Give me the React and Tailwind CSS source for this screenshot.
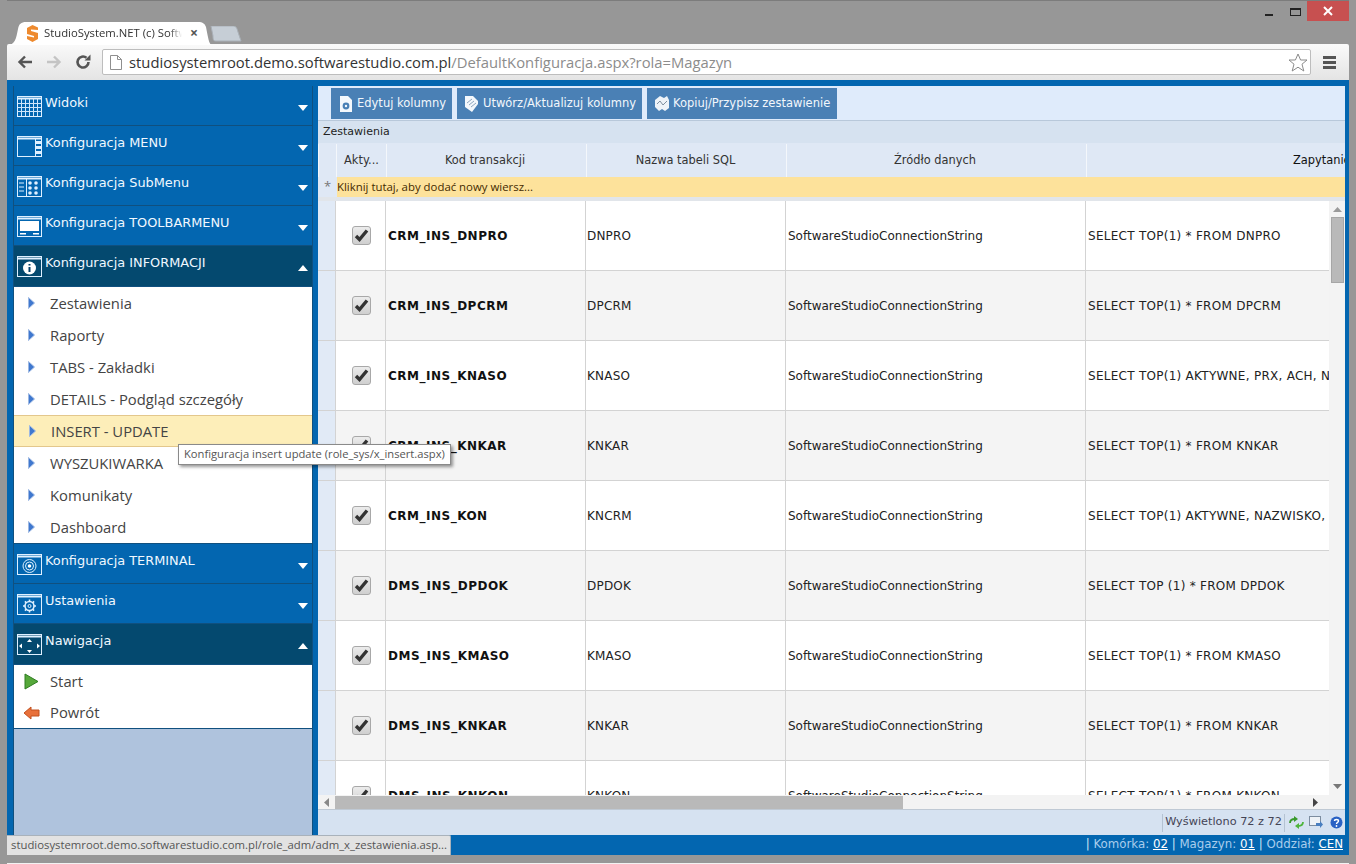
const SANS = "font-['Open_Sans','Noto_Sans',sans-serif]";
const VERD = "font-['DejaVu_Sans',sans-serif]";

const ROWS = [
  ["CRM_INS_DNPRO", "DNPRO", "SELECT TOP(1) * FROM DNPRO"],
  ["CRM_INS_DPCRM", "DPCRM", "SELECT TOP(1) * FROM DPCRM"],
  ["CRM_INS_KNASO", "KNASO", "SELECT TOP(1) AKTYWNE, PRX, ACH, NIP, NAZWA"],
  ["CRM_INS_KNKAR", "KNKAR", "SELECT TOP(1) * FROM KNKAR"],
  ["CRM_INS_KON", "KNCRM", "SELECT TOP(1) AKTYWNE, NAZWISKO, IMIE, TELEFON"],
  ["DMS_INS_DPDOK", "DPDOK", "SELECT TOP (1) * FROM DPDOK"],
  ["DMS_INS_KMASO", "KMASO", "SELECT TOP(1) * FROM KMASO"],
  ["DMS_INS_KNKAR", "KNKAR", "SELECT TOP(1) * FROM KNKAR"],
  ["DMS_INS_KNKON", "KNKON", "SELECT TOP(1) * FROM KNKON"],
];

// biała ramka okna z paskiem u góry, w środku rysunek danej sekcji
function WinIcon({ children }) {
  return (
    <svg width="25" height="21" viewBox="0 0 25 21" className="shrink-0" fill="none" stroke="#dff0ff" strokeWidth="1">
      <rect x="0.5" y="0.5" width="24" height="20" />
      <path d="M0.5 2.5H24.5" strokeWidth="2" />
      {children}
    </svg>
  );
}

const ICONS = {
  table: (
    <path d="M0.5 7.5H24.5M0.5 11.5H24.5M0.5 15.5H24.5M4.5 3V20M8.5 3V20M12.5 3V20M16.5 3V20M20.5 3V20" stroke="#cfe6fa" />
  ),
  menu: (
    <>
      <path d="M18.5 3V20" />
      <rect x="19" y="5" width="5" height="3" fill="#dff0ff" stroke="none" />
      <rect x="19" y="10" width="5" height="3" fill="#dff0ff" stroke="none" />
      <rect x="19" y="15" width="5" height="3" fill="#dff0ff" stroke="none" />
    </>
  ),
  sub: (
    <>
      <path d="M9.5 3V20M2 7H7M2 11H7M2 15H7" />
      <g fill="#dff0ff" stroke="none">
        <circle cx="13" cy="7" r="1.8" /><circle cx="19" cy="7" r="1.8" />
        <circle cx="13" cy="12" r="1.8" /><circle cx="19" cy="12" r="1.8" />
        <circle cx="13" cy="17" r="1.8" /><circle cx="19" cy="17" r="1.8" />
      </g>
    </>
  ),
  toolbar: (
    <>
      <rect x="3" y="5" width="19" height="10" fill="#fff" stroke="none" />
      <rect x="3" y="17" width="6" height="1.5" fill="#fff" stroke="none" />
      <rect x="16" y="17" width="6" height="1.5" fill="#fff" stroke="none" />
    </>
  ),
  info: (
    <>
      <circle cx="12.5" cy="12" r="6.5" fill="#fff" stroke="none" />
      <path d="M12.5 8V9.6M12.5 11V16" stroke="#033f68" strokeWidth="2" />
    </>
  ),
  terminal: (
    <>
      <circle cx="12.5" cy="12" r="6.5" />
      <circle cx="12.5" cy="12" r="4" />
      <circle cx="12.5" cy="12" r="1.8" fill="#fff" stroke="none" />
    </>
  ),
  gear: (
    <>
      <circle cx="12.5" cy="12" r="4.5" strokeWidth="1.6" />
      <circle cx="12.5" cy="12" r="1.5" />
      <path d="M12.5 5.5V7.5M12.5 16.5V18.5M6 12H8M17 12H19M7.9 7.4L9.3 8.8M15.7 15.2L17.1 16.6M17.1 7.4L15.7 8.8M9.3 15.2L7.9 16.6" strokeWidth="1.6" />
    </>
  ),
  nav: (
    <g fill="#fff" stroke="none">
      <path d="M12.5 5L15 8H10Z" /><path d="M12.5 19L10 16H15Z" />
      <path d="M2 12L5 9.5V14.5Z" /><path d="M23 12L20 9.5V14.5Z" />
    </g>
  ),
};

function PanelHeader({ icon, title, open }) {
  return (
    <div className={`flex shrink-0 border-b border-[#10507f] pl-[3px] pr-[4px] pt-[10px] ${open ? "h-[41px] bg-[#04496f]" : "h-10 bg-[#0366b0]"}`}>
      <WinIcon>{ICONS[icon]}</WinIcon>
      <span className={`${VERD} ml-[3px] -mt-[1px] flex-1 text-[12.9px] leading-[16px] text-[#f0f8ff]`}>{title}</span>
      <svg width="10" height="6" viewBox="0 0 10 6" className="mt-[9px]" fill="#fff">
        <path d={open ? "M5 0L10 6H0Z" : "M0 0H10L5 6Z"} />
      </svg>
    </div>
  );
}

function BlueArrow() {
  return (
    <svg width="7" height="12" viewBox="0 0 7 12" className="shrink-0">
      <path d="M0.5 0.5L6.5 6L0.5 11.5Z" fill="#3f78cf" stroke="#9db8e2" />
    </svg>
  );
}

function SubItem({ label, active }) {
  return (
    <div className={`${SANS} flex h-8 items-center text-[14.8px] text-[#444] ${active ? "border-y border-[#e3c78c] bg-[#fdeeb9] pl-[15px]" : "pl-[14px]"}`}>
      <BlueArrow />
      <span className="ml-[15px]">{label}</span>
    </div>
  );
}

function Check() {
  return (
    <div className="flex h-[19px] w-[19px] items-center justify-center rounded-[3px] border border-[#a8a8a8] bg-gradient-to-b from-[#ececec] to-[#cfcfcf]">
      <svg width="15" height="13" viewBox="0 0 15 13" fill="none" stroke="#333" strokeWidth="3.4">
        <path d="M2 7L5.5 10.5L13 1.5" />
      </svg>
    </div>
  );
}

function ToolButton({ w, label, children }) {
  return (
    <button className={`flex h-[31px] items-center gap-[3px] bg-[#4a80b5] pl-[7px] text-[11.5px] text-[#f2f7fc] ${VERD} ${w}`}>
      <svg width="16" height="18" viewBox="0 0 16 18" className="shrink-0">{children}</svg>
      <span className="whitespace-nowrap">{label}</span>
    </button>
  );
}

export default function App() {
  return (
    <div className="relative flex h-[864px] w-[1356px] flex-col overflow-hidden bg-[#979797] px-[7px]">
      {/* Pasek tytułu i karty */}
      <div className="relative flex h-[44px] shrink-0 items-start border-t border-[#7c7c7c]">
        <div className="relative mt-[20px] flex h-[24px] w-[205px] items-center pl-[19px]">
          <svg width="205" height="24" viewBox="0 0 205 24" className="absolute left-0 top-0">
            <path d="M0 24C8 24 9 18 11 8C12 3 14 1 19 1H191C196 1 198 3 199 6C201 16 202 24 205 24Z" fill="#fff" />
          </svg>
          <svg width="13" height="17" viewBox="0 0 13 17" className="relative shrink-0">
            <path d="M12 5V2.5L6.5 0L1 3V9L8 11V12.5L1 11V14L6.5 17L12 14V8L5 6V4.5Z" fill="#ee8a2e" />
          </svg>
          <span className={`${SANS} relative ml-[5px] w-[138px] overflow-hidden whitespace-nowrap text-[11.3px] text-[#333] [mask-image:linear-gradient(to_right,#000_125px,transparent_138px)]`}>StudioSystem.NET (c) Software</span>
          <span className="relative ml-[8px] text-[14px] font-bold leading-none text-[#555]">×</span>
        </div>
        <svg width="32" height="16" viewBox="0 0 32 16" className="ml-[-2px] mt-[25px]">
          <path d="M1 0H23C26 0 27 2 28 6L31 15H6C3 15 3 13 3 10Z" fill="#c6ced6" stroke="#a9b0b7" />
        </svg>
        <div className="absolute right-0 top-0 flex items-start">
          <div className="mr-[17px] mt-[13px] h-[2px] w-[8px] bg-[#222]" />
          <div className="mr-[6px] mt-[7px] h-[8px] w-[11px] border border-t-2 border-[#222]" />
          <div className="flex h-[20px] w-[42px] items-center justify-center bg-[#c75050]">
            <svg width="10" height="10" viewBox="0 0 10 10" stroke="#fff" strokeWidth="2"><path d="M1 1L9 9M9 1L1 9" /></svg>
          </div>
        </div>
      </div>

      {/* Pasek adresu */}
      <div className="flex h-[36px] shrink-0 items-center rounded-t-[2px] bg-gradient-to-b from-[#fafafa] to-[#e4e4e4] pl-[10px]">
        <svg width="16" height="14" viewBox="0 0 16 14" fill="none" stroke="#555" strokeWidth="2.4"><path d="M15 7H3M8 1.5L2.5 7L8 12.5" /></svg>
        <svg width="16" height="14" viewBox="0 0 16 14" fill="none" stroke="#c4c4c4" strokeWidth="2.4" className="ml-[13px]"><path d="M1 7H13M8 1.5L13.5 7L8 12.5" /></svg>
        <svg width="16" height="16" viewBox="0 0 16 16" fill="none" stroke="#555" strokeWidth="2.6" className="ml-[13px]"><path d="M13.5 8A5.5 5.5 0 1 1 11.5 3.8" /><path d="M9.5 6.5H15.5V0.5Z" fill="#555" stroke="none" /></svg>
        <div className="ml-[11px] flex h-[26px] w-[1209px] items-center rounded-[2px] border border-[#bdbdbd] bg-white pl-[7px]">
          <svg width="12" height="15" viewBox="0 0 12 15" fill="#fff" stroke="#8f8f8f"><path d="M0.5 0.5H7.5L11.5 4.5V14.5H0.5Z" /><path d="M7.5 0.5V4.5H11.5" fill="none" /></svg>
          <span className={`${SANS} ml-[7px] flex-1 whitespace-nowrap text-[14.8px] text-[#333]`}>
            studiosystemroot.demo.softwarestudio.com.pl<span className="text-[#8c8c8c]">/DefaultKonfiguracja.aspx?rola=Magazyn</span>
          </span>
          <svg width="20" height="19" viewBox="0 0 20 19" fill="#fff" stroke="#8a8a8a" className="mr-[2px]"><path d="M10 1L12.6 7H19L14 11.2L15.8 18L10 14.2L4.2 18L6 11.2L1 7H7.4Z" /></svg>
        </div>
        <div className="ml-[12px] flex flex-col gap-[2px]">
          <div className="h-[3px] w-[13px] bg-[#555]" />
          <div className="h-[3px] w-[13px] bg-[#555]" />
          <div className="h-[3px] w-[13px] bg-[#555]" />
        </div>
      </div>

      {/* Strona */}
      <div className="flex h-[755px] shrink-0 gap-[5px] bg-[#0366b0] pl-[6px] pr-[4px] pt-[6px]">
        {/* Menu boczne */}
        <div className="flex w-[300px] shrink-0 flex-col border-x border-[#10507f] bg-[#afc3dd]">
          <PanelHeader icon="table" title="Widoki" />
          <PanelHeader icon="menu" title="Konfiguracja MENU" />
          <PanelHeader icon="sub" title="Konfiguracja SubMenu" />
          <PanelHeader icon="toolbar" title="Konfiguracja TOOLBARMENU" />
          <PanelHeader open icon="info" title="Konfiguracja INFORMACJI" />
          <div className="shrink-0 border-b border-[#10507f] bg-white">
            <SubItem label="Zestawienia" />
            <SubItem label="Raporty" />
            <SubItem label="TABS - Zakładki" />
            <SubItem label="DETAILS - Podgląd szczegóły" />
            <SubItem active label="INSERT - UPDATE" />
            <SubItem label="WYSZUKIWARKA" />
            <SubItem label="Komunikaty" />
            <SubItem label="Dashboard" />
          </div>
          <PanelHeader icon="terminal" title="Konfiguracja TERMINAL" />
          <PanelHeader icon="gear" title="Ustawienia" />
          <PanelHeader open icon="nav" title="Nawigacja" />
          <div className="shrink-0 border-b border-[#10507f] bg-white">
            <div className={`${SANS} flex h-8 items-center pl-[10px] text-[14.8px] text-[#444]`}>
              <svg width="15" height="17" viewBox="0 0 15 17"><path d="M1 1L14 8.5L1 16Z" fill="#56a83a" stroke="#2f7d22" /></svg>
              <span className="ml-[11px]">Start</span>
            </div>
            <div className={`${SANS} flex h-[31px] items-center pl-[9px] text-[14.8px] text-[#444]`}>
              <svg width="17" height="14" viewBox="0 0 17 14"><path d="M16 4V10H8V13L1 7L8 1V4Z" fill="#e8703a" stroke="#c2501f" /></svg>
              <span className="ml-[10px]">Powrót</span>
            </div>
          </div>
        </div>

        {/* Panel główny */}
        <div className="flex h-[749px] w-[1027px] shrink-0 flex-col bg-[#dfebfb]">
          <div className="flex h-[35px] shrink-0 items-start gap-[5px] border-b border-[#b8c8da] pl-[13px] pt-[2px]">
            <ToolButton w="w-[121px]" label="Edytuj kolumny">
              <path d="M2 1H10L14 5V17H2Z" fill="#f4f8fc" />
              <circle cx="8" cy="11" r="3.4" fill="#4a80b5" />
              <circle cx="8" cy="11" r="1.2" fill="#f4f8fc" />
            </ToolButton>
            <ToolButton w="w-[185px]" label="Utwórz/Aktualizuj kolumny">
              <path d="M1 1H9L14 6V9L8 17L1 12Z" fill="#f4f8fc" />
              <path d="M3 8L8 4M5 10L10 6M7 12L12 8" fill="none" stroke="#8da6bf" />
            </ToolButton>
            <ToolButton w="w-[190px]" label="Kopiuj/Przypisz zestawienie">
              <path d="M1 5L6 1L10 3L13 1L15 5V13L11 16L8 14L5 16L1 12Z" fill="#eef3f8" />
              <path d="M3 9L6 6L9 10L13 6" fill="none" stroke="#7f8f9f" />
            </ToolButton>
          </div>
          <div className={`${VERD} flex h-[22px] shrink-0 items-center bg-[#d6e2f0] pl-[5px] text-[11px] text-[#222]`}>Zestawienia</div>
          <div className={`${VERD} grid h-[34px] shrink-0 grid-cols-[18px_50px_200px_200px_300px_1fr] overflow-hidden bg-[#dfe8f5] pt-[1px] text-[11.4px] text-[#333] [&>div]:border-l [&>div]:border-[#f4f7fb]`}>
            <div className="border-l-0" />
            <div className="flex items-center justify-center">Akty...</div>
            <div className="flex items-center justify-center pr-[3px]">Kod transakcji</div>
            <div className="flex items-center justify-center pr-[2px]">Nazwa tabeli SQL</div>
            <div className="flex items-center justify-center pr-[3px]">Źródło danych</div>
            <div className="flex items-center pl-[206px] text-[#111]">Zapytanie</div>
          </div>
          <div className={`${SANS} flex h-[20px] shrink-0 items-center bg-[#fde29b] text-[11.4px] text-[#442a00]`}>
            <span className="flex h-full w-[19px] items-center justify-center bg-[#dfe8f5] text-[13px] text-[#777]">*</span>
            <span className="whitespace-nowrap">Kliknij tutaj, aby dodać nowy wiersz...</span>
          </div>
          <div className="h-[4px] shrink-0 bg-[#e1e5ea]" />

          {/* Wiersze tabeli */}
          <div className="flex h-[594px] shrink-0 overflow-hidden">
            <div className="w-[1011px] shrink-0 overflow-hidden">
              {ROWS.map((r, i) => (
                <div key={r[0]} className={`${VERD} grid h-[70px] grid-cols-[18px_50px_200px_200px_300px_243px] text-[12px] text-[#222] ${i % 2 ? "bg-[#f4f4f4]" : "bg-white"}`}>
                  <div className="border-r border-b border-[#d3d3d3] bg-[#e1eaf6]" />
                  <div className="flex items-center justify-center border-r border-b border-[#d3d3d3] pl-[2px]"><Check /></div>
                  <div className="flex items-center border-r border-b border-[#d3d3d3] pl-[2px] font-bold tracking-[0.5px] text-[#111]">{r[0]}</div>
                  <div className="flex items-center border-r border-b border-[#d3d3d3] pl-[1px] tracking-[0.2px]">{r[1]}</div>
                  <div className="flex items-center border-r border-b border-[#d3d3d3] pl-[2px]">SoftwareStudioConnectionString</div>
                  <div className="flex items-center overflow-hidden whitespace-nowrap border-b border-[#d3d3d3] pl-[2px] tracking-[0.27px]">{r[2]}</div>
                </div>
              ))}
            </div>
            {/* Pionowy suwak */}
            <div className="flex w-[16px] shrink-0 flex-col items-center bg-[#f3f3f3]">
              <svg width="9" height="5" viewBox="0 0 9 5" fill="#9a9a9a" className="mt-[6px]"><path d="M4.5 0L9 5H0Z" /></svg>
              <div className="mt-[5px] h-[66px] w-[13px] border border-[#a6a6a6] bg-[#b9b9b9]" />
              <svg width="9" height="5" viewBox="0 0 9 5" fill="#777" className="mt-auto mb-[6px]"><path d="M0 0H9L4.5 5Z" /></svg>
            </div>
          </div>

          {/* Poziomy suwak */}
          <div className="flex h-[15px] shrink-0 items-center border-b border-[#bfc9d4] bg-[#f3f3f3]">
            <svg width="5" height="9" viewBox="0 0 5 9" fill="#888" className="ml-[6px]"><path d="M5 0V9L0 4.5Z" /></svg>
            <div className="ml-[6px] h-[13px] w-[568px] bg-[#b9b9b9]" />
            <svg width="5" height="9" viewBox="0 0 5 9" fill="#444" className="ml-[410px]"><path d="M0 0L5 4.5L0 9Z" /></svg>
          </div>

          {/* Stopka tabeli */}
          <div className={`${VERD} flex h-[25px] shrink-0 items-center justify-end bg-[#d6e2f1] pr-[2px] text-[11.3px] text-[#445]`}>
            <span className="flex h-[18px] items-center border-x border-[#b4c2d2] px-[2px]">Wyświetlono 72 z 72</span>
            <svg width="15" height="13" viewBox="0 0 15 13" className="ml-[4px]" fill="none" strokeWidth="1.8">
              <path d="M1 7C1 4 3 3 6 3" stroke="#3a9a2c" /><path d="M5 0L9 3L5 6Z" fill="#3a9a2c" />
              <path d="M14 6C14 9 12 10 9 10" stroke="#4fb53c" /><path d="M10 13L6 10L10 7Z" fill="#4fb53c" />
            </svg>
            <svg width="14" height="13" viewBox="0 0 14 13" className="ml-[5px]"><rect x="0.5" y="0.5" width="11" height="9" fill="#eef2f7" stroke="#7d8da0" /><path d="M7 7H11V5L14 8.5L11 12V10H7Z" fill="#4a7fc0" /></svg>
            <svg width="13" height="13" viewBox="0 0 13 13" className="ml-[7px]"><circle cx="6.5" cy="6.5" r="6" fill="#2a62c4" /><path d="M4.5 5C4.5 3 8.5 3 8.5 5C8.5 6.5 6.5 6.2 6.5 8" fill="none" stroke="#fff" strokeWidth="1.4" /><circle cx="6.5" cy="10" r="0.9" fill="#fff" /></svg>
          </div>
        </div>
      </div>

      {/* Pasek stanu */}
      <div className={`${VERD} flex h-[20px] shrink-0 items-center justify-end whitespace-pre bg-[#0366b0] pr-[6px] text-[11.8px] text-[#a9cdec]`}>
        <span className="text-[#cfe3f5]">| </span>Komórka: <span className="text-white underline">02</span>
        <span className="text-[#cfe3f5]"> | </span>Magazyn: <span className="text-white underline">01</span>
        <span className="text-[#cfe3f5]"> | </span>Oddział: <span className="text-white underline">CEN</span>
      </div>
      <div className="h-[8px] shrink-0" />
      <div className="h-px shrink-0 bg-[#f2f2f2]" />

      {/* Dymek adresu linku */}
      <div className={`${SANS} absolute left-[7px] top-[835px] flex h-[20px] w-[444px] items-center rounded-tr-[2px] border-t border-r border-[#a9b2bb] bg-[#e2e2e2] pl-[4px] text-[11.33px] text-[#555]`}>
        <span className="whitespace-nowrap">studiosystemroot.demo.softwarestudio.com.pl/role_adm/adm_x_zestawienia.asp...</span>
      </div>

      {/* Podpowiedź */}
      <div className={`${SANS} absolute left-[178px] top-[444px] flex h-[21px] w-[273px] items-center border border-[#8a8a8a] bg-white pl-[5px] text-[11.2px] text-[#555] shadow-[2px_2px_3px_rgba(0,0,0,0.4)]`}>
        <span className="whitespace-nowrap">Konfiguracja insert update (role_sys/x_insert.aspx)</span>
      </div>
    </div>
  );
}
